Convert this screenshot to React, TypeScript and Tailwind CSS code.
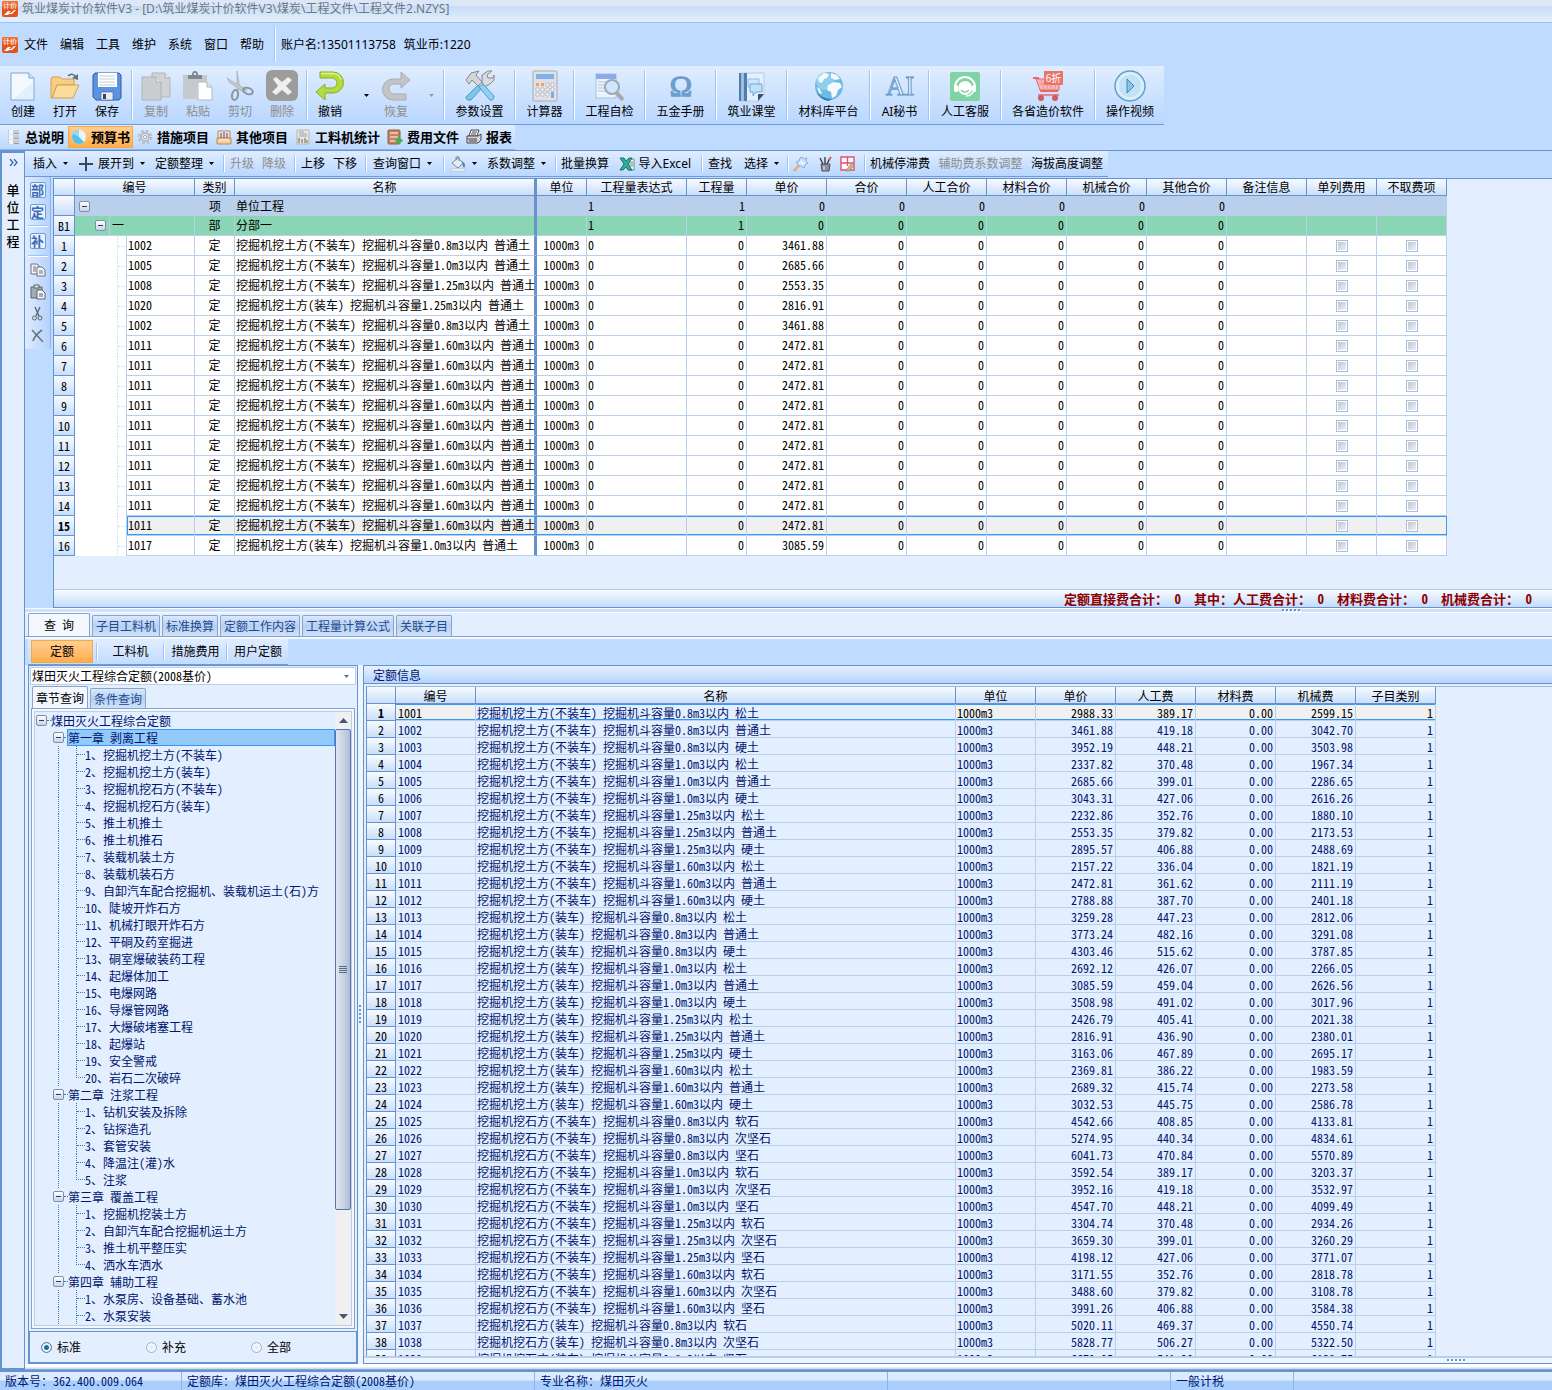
import { ReactNode, useState } from "react";
import { clsx } from "clsx";

const SONG =
  "font-['Noto_Sans_CJK_SC',sans-serif] [font-feature-settings:'hwid']";
const YAHEI = "font-['Noto_Sans','Noto_Sans_CJK_SC',sans-serif]";

/* ---------- icons ---------- */

function Svg({ size = 32, children }: { size?: number; children: ReactNode }) {
  return (
    <svg
      width={size}
      height={size}
      viewBox={`0 0 ${size} ${size}`}
      className="shrink-0"
      aria-hidden="true"
    >
      {children}
    </svg>
  );
}

function Caret({ muted = false }: { muted?: boolean }) {
  return (
    <svg width="5" height="3" viewBox="0 0 5 3" aria-hidden="true">
      <path d="M0 0h5L2.5 3z" fill={muted ? "#8d99ad" : "#000"} />
    </svg>
  );
}

function Logo() {
  return (
    <Svg size={16}>
      <rect width="16" height="16" rx="2" fill="#e2531d" />
      <rect width="16" height="7" rx="2" fill="#ee6f35" />
      <text x="1" y="7" fontSize="7" fill="#fff" fontFamily="Noto Sans CJK SC">
        计价
      </text>
      <path d="M2 14l4-4h3l-2 2h2l3-3h2l-4 4H7l-1 1z" fill="#fff" />
    </Svg>
  );
}

const NewIcon = (
  <Svg>
    <path d="M4 3h18l5 5v22H4z" fill="#f4f9ff" stroke="#7ba6d6" />
    <path d="M22 3v5h5" fill="#d5e6fa" stroke="#7ba6d6" />
    <path d="M6 29h20V12L9 27z" fill="#d9e8fb" opacity=".6" />
  </Svg>
);
const OpenIcon = (
  <Svg>
    <path d="M2 9l1-2h8l2 2h12v6H8L3 28H2z" fill="#f6cf86" stroke="#d3a049" />
    <path d="M8 15h22l-6 13H3z" fill="#fbdc9c" stroke="#d3a049" />
    <path d="M19 6q4-4 8 1" fill="none" stroke="#60707f" strokeWidth="1.6" />
    <path d="M23 8l6 2V4z" fill="#60707f" />
  </Svg>
);
const SaveIcon = (
  <Svg>
    <path d="M4 3h24l2 2v23l-2 2H5l-3-3V5z" fill="#5b92e2" stroke="#2e5fa9" />
    <path d="M7 3h19v14H7z" fill="#fff" />
    <path d="M8 6h16M8 9h16M8 12h16M8 15h16" stroke="#c8cdd4" />
    <path d="M10 22h12v8H10z" fill="#e8ebef" stroke="#3c63a0" strokeWidth=".6" />
    <path d="M12 24h3v5h-3z" fill="#3e4550" />
  </Svg>
);
const CopyIcon = (
  <Svg>
    <path d="M12 3h13l5 5v19H12z" fill="#d0d2d5" stroke="#b4b7bc" />
    <path d="M2 7h14l5 5v18H2z" fill="#cbcdd0" stroke="#afb2b7" />
    <path d="M16 7v5h5M25 3v5h5" fill="#e5e6e8" stroke="#afb2b7" />
  </Svg>
);
const PasteIcon = (
  <Svg>
    <path d="M1 5h24v9H15v15H1z" fill="#c6c9ce" />
    <path d="M6 5h4q0-4 3-4t3 4h4v4H6z" fill="#7d8894" />
    <path d="M12 3h2v2h-2z" fill="#e3e7ec" />
    <path d="M16 12h9l5 5v13H16z" fill="#fff" stroke="#b3b8bf" />
    <path d="M25 12v5h5" fill="#dfe3e8" stroke="#b3b8bf" />
  </Svg>
);
const CutIcon = (
  <Svg>
    <path d="M13 1l3 18-3 2z" fill="#c3c7cd" stroke="#a2a8b0" strokeWidth=".6" />
    <path d="M3 8l20 12-4 2L5 12z" fill="#c3c7cd" stroke="#a2a8b0" strokeWidth=".6" />
    <ellipse cx="11" cy="25" rx="3" ry="5" fill="none" stroke="#8d939c" strokeWidth="2" transform="rotate(12 11 25)" />
    <ellipse cx="24" cy="21" rx="5" ry="3" fill="none" stroke="#8d939c" strokeWidth="2" transform="rotate(20 24 21)" />
  </Svg>
);
const DeleteIcon = (
  <Svg>
    <rect width="32" height="31" rx="6" fill="#9c9c9c" />
    <path d="M7 9l3-2 6 5 6-5 4 3-6 6 6 6-4 3-6-5-6 5-4-3 6-6z" fill="#efefef" />
  </Svg>
);
const UndoIcon = (
  <Svg>
    <path
      d="M6 2h13a10 10 0 0 1 0 21h-8v7L2 22l9-8v4h7a5 5 0 0 0 0-10H6z"
      fill="#b4dc3e"
      stroke="#86ad22"
    />
    <path d="M7 3.500h12q6 0 8 6" fill="none" stroke="#dcf38d" strokeWidth="1.5" />
  </Svg>
);
const RedoIcon = (
  <Svg>
    <g transform="matrix(-1 0 0 -1 32 32)">
      <path
        d="M6 2h13a10 10 0 0 1 0 21h-8v7L2 22l9-8v4h7a5 5 0 0 0 0-10H6z"
        fill="#c2c4c7"
        stroke="#aaadb1"
      />
    </g>
  </Svg>
);
const ToolsIcon = (
  <Svg>
    <path d="M2 27l12-12 4 3L7 30q-5 1-5-3z" fill="#7cc4ec" stroke="#5599c4" />
    <path d="M2 10l5-7 8-2-3 4 6 7-4 4-6-6-3 4z" fill="#d3d5d8" stroke="#85898f" />
    <path d="M18 12V5l6-4h4l-5 4 1 3h5l1-3v5l-4 4-6 3z" fill="#d9dbde" stroke="#85898f" />
    <path d="M15 17l4-3 11 12q0 5-4 4z" fill="#8fd0f3" stroke="#5599c4" />
  </Svg>
);
const CalcIcon = (
  <Svg>
    <rect x="4" y="1" width="24" height="30" rx="1" fill="#dfe1e4" stroke="#a8acb3" />
    <rect x="7" y="4" width="18" height="5" fill="#80b2ea" />
    <path d="M7 13h3v3H7zm5 0h3v3h-3z" fill="#f0a35c" />
    <path
      d="M17 13h3v3h-3zm5 0h3v3h-3zM7 18h3v3H7zm5 0h3v3h-3zm5 0h3v3h-3zm5 0h3v3h-3zM7 23h3v3H7zm5 0h3v3h-3zm5 0h3v3h-3z"
      fill="#fff"
      stroke="#aab"
      strokeWidth=".7"
    />
    <path d="M22 22h3v6h-3z" fill="#77aee8" />
  </Svg>
);
const CheckIcon = (
  <Svg>
    <rect x="2" y="4" width="20" height="24" fill="#edf3fb" stroke="#a9bfdf" />
    <rect x="2" y="4" width="20" height="5" fill="#8da9ea" />
    <path d="M4 12h9M4 15h7M4 18h7M4 21h8" stroke="#b4c4da" />
    <circle cx="18" cy="17" r="7" fill="#cfe6fb" stroke="#9aa9bb" strokeWidth="2" />
    <path d="M22 22l7 8" stroke="#a8a9ad" strokeWidth="4" />
  </Svg>
);
const OmegaIcon = (
  <Svg>
    <text x="16" y="26" textAnchor="middle" fontSize="30" fill="#6d9dcc" stroke="#6d9dcc" strokeWidth="1.3" fontFamily="Liberation Serif">
      Ω
    </text>
  </Svg>
);
const ClassIcon = (
  <Svg>
    <path d="M5 3h23v21l-6 7H5z" fill="#e2f1fd" stroke="#b5cce3" />
    <path d="M3 3h8v28H3z" fill="#4d7fae" />
    <path d="M5 3h3v28H5z" fill="#9fc0dc" />
    <path d="M12 9h11v8H12z" fill="#cfe7f8" stroke="#8dbbe0" />
    <path d="M14 14h12v8h-6l-3 4v-4h-3z" fill="#bfe0f6" stroke="#67a9d8" />
    <path d="M22 31v-7h6z" fill="#3d5266" />
  </Svg>
);
const GlobeIcon = (
  <Svg>
    <circle cx="16" cy="16" r="14" fill="#6cbbe2" />
    <circle cx="12" cy="11" r="9" fill="#a9dcf2" opacity=".6" />
    <path d="M5 8l6-5 5 1-2 4-3 1-2 4-3-1zM15 15l6-3 6 1 2 4-4 3-2 6-4 2-1-6-4-2zM18 3l6 2 3 4-5 1-4-2zM4 17l3 2 2 5-3-1z" fill="#f4fafd" />
    <path d="M3 21q7 9 17 8l-5 2Q6 29 3 21z" fill="#2f7fae" />
  </Svg>
);
const AiIcon = (
  <Svg>
    <text x="16" y="25" textAnchor="middle" fontSize="27" fill="#f2f8ff" stroke="#6296c8" strokeWidth="1" fontFamily="Liberation Serif">
      AI
    </text>
  </Svg>
);
const ServiceIcon = (
  <Svg>
    <rect x="1" y="2" width="30" height="29" rx="2" fill="#7fd3a5" />
    <path d="M6 17a10 10 0 0 1 20 0" fill="none" stroke="#fff" strokeWidth="2" />
    <rect x="5" y="15" width="4" height="7" rx="1.5" fill="#fff" />
    <rect x="23" y="15" width="4" height="7" rx="1.5" fill="#fff" />
    <circle cx="16" cy="18" r="7" fill="#fff" />
    <path d="M12 20q4 4 8 0" fill="none" stroke="#7fd3a5" strokeWidth="1.3" />
    <path d="M24 22q-2 4-7 4" fill="none" stroke="#fff" strokeWidth="1.5" />
  </Svg>
);
const CartIcon = (
  <Svg>
    <path d="M1 8h5l3 13h17" fill="none" stroke="#e56b6b" strokeWidth="1.8" />
    <path d="M4 9h23v11H8z" fill="#f7b5b5" stroke="#e56b6b" />
    <path d="M9 10l3 9m2-9l2 9m3-9v9m5-9l-1 9M6 14h20" stroke="#e88" strokeWidth=".8" />
    <path d="M6 25h21" stroke="#e56b6b" strokeWidth="1.5" />
    <circle cx="9" cy="28" r="3" fill="#d65a5a" />
    <circle cx="23" cy="28" r="3" fill="#d65a5a" />
    <rect x="12" y="1" width="19" height="14" rx="1" fill="#e87565" />
    <text x="21.5" y="12" textAnchor="middle" fontSize="10" fill="#fff" fontFamily="Noto Sans CJK SC">
      6折
    </text>
  </Svg>
);
const PlayIcon = (
  <Svg>
    <circle cx="16" cy="16" r="15" fill="#d4ebfa" stroke="#5d9cc7" strokeWidth="1.4" />
    <circle cx="16" cy="16" r="12" fill="#c3e2f6" stroke="#e9f6ff" />
    <path d="M13 9l7 7-7 7z" fill="#8fc3e6" stroke="#3f86b8" />
  </Svg>
);

const DbIcon = (
  <Svg size={16}>
    <path d="M3 1h11v4H3zM3 6h11v4H3zM3 11h11v4H3z" fill="#c7cacf" />
    <path d="M4 1h4v4H4zM4 6h4v4H4zM4 11h4v4H4z" fill="#f3f4f6" />
    <path d="M9 4.500h5M9 9.500h5M9 14.500h5" stroke="#9a9fa7" />
  </Svg>
);
const PieIcon = (
  <Svg size={16}>
    <circle cx="8" cy="8" r="7" fill="#e3f6fd" />
    <path d="M8 8V1a7 7 0 1 0 5 12z" fill="#56bfe6" />
    <path d="M8 8V1a7 7 0 0 0-6 4z" fill="#95daf3" />
  </Svg>
);
const GearIcon = (
  <Svg size={16}>
    <circle cx="8" cy="8" r="6" fill="none" stroke="#b4bfce" strokeWidth="2.6" strokeDasharray="2.6 2.1" />
    <circle cx="8" cy="8" r="4" fill="#dfe6ef" stroke="#a8b4c5" strokeWidth="1.5" />
    <circle cx="8" cy="8" r="1.6" fill="#fff" stroke="#9fabbd" />
  </Svg>
);
const BoxIcon = (
  <Svg size={16}>
    <path d="M2 2h12v7H2z" fill="#efe4d6" stroke="#b08c63" />
    <path d="M5 4v5M8 3v6M11 4v5" stroke="#8a6ea0" strokeWidth="1.4" />
    <path d="M1 9h14v6H1z" fill="#f2cf9d" stroke="#b98a4e" />
    <path d="M3 11h10" stroke="#fff3df" />
  </Svg>
);
const StatIcon = (
  <Svg size={16}>
    <path d="M2 1h12v14H2z" fill="#e9e9e4" stroke="#b4b5ae" />
    <path d="M4 3h5M4 5h8M4 7h8" stroke="#9fa19a" />
    <path d="M4 9v5M7 10v4M10 9v5M12 11v3" stroke="#8d8f88" strokeWidth="1.5" />
  </Svg>
);
const FeeIcon = (
  <Svg size={16}>
    <rect x="1" y="1" width="12" height="14" rx="1" fill="#c08465" stroke="#95593c" />
    <path d="M3 4h8M3 8h8M3 12h6" stroke="#edd0bd" strokeWidth="1.6" />
    <path d="M12 8v7M8.500 11.500h7" stroke="#35b34a" strokeWidth="2.4" />
  </Svg>
);
const PrintIcon = (
  <Svg size={16}>
    <path d="M5 1h8l-2 6H3z" fill="#fff" stroke="#444" />
    <path d="M1 7h11l3-2v6l-3 3H1z" fill="#d5d5d5" stroke="#444" />
    <path d="M2 10h9M3 12h8M6 3h5M5 5h5" stroke="#444" />
  </Svg>
);

const PlusIcon = (
  <Svg size={16}>
    <path d="M8 1v14M1 8h14" stroke="#3d4754" strokeWidth="2" />
  </Svg>
);
const BucketIcon = (
  <Svg size={16}>
    <path d="M2 7l6-5 5 5-5 5z" fill="#e8edf3" stroke="#7b8795" />
    <path d="M6 4V1h3v4" fill="none" stroke="#7b8795" />
    <path d="M12 5q5 3 2 7-2-2-2-7z" fill="#5a86c4" />
    <path d="M1 13h14v2H1z" fill="#fff" stroke="#b3b8be" strokeWidth=".6" />
  </Svg>
);
const ExcelIcon = (
  <Svg size={16}>
    <path d="M10 3h5v11h-5z" fill="#fff" stroke="#5c8a7d" />
    <path d="M11 6h3M11 8h3M11 10h3" stroke="#5c8a7d" />
    <path d="M1 2h4l2 3 3-3h3L9 8l4 6H9l-2-3-3 3H1l4-6z" fill="#2fae9b" stroke="#0d5a50" strokeWidth=".8" />
  </Svg>
);
const MagicIcon = (
  <Svg size={16}>
    <path d="M9 1l2 2 3-1-1 3 2 2-3 2-1 3-3-2-3 1V8L3 6l3-1 1-3z" fill="#c4e0fa" stroke="#7fb3e6" />
    <path d="M6 7h6M8 4l2 6" stroke="#fff" />
    <path d="M1 15l5-6" stroke="#e8ab68" strokeWidth="2.4" />
  </Svg>
);
const PenCupIcon = (
  <Svg size={16}>
    <path d="M4 8h9l-1 7H5z" fill="#8d9299" stroke="#4c5158" />
    <path d="M6 8L3 2M8 8V1M10 8l3-6" stroke="#3b4046" strokeWidth="1.4" />
    <path d="M12 4l2-3" stroke="#d2504c" strokeWidth="1.6" />
    <path d="M7 10v4" stroke="#e8ebee" />
  </Svg>
);
const GridPenIcon = (
  <Svg size={16}>
    <path d="M1 1h13v13H1zM7.500 1v9M1 7h13" fill="#fff" stroke="#e25275" strokeWidth="1.4" />
    <path d="M6 14l6-7 3 2-6 6H6z" fill="#cdb08b" stroke="#8e7757" strokeWidth=".6" />
  </Svg>
);

/* ---------- top bars ---------- */

const MENUS = ["文件", "编辑", "工具", "维护", "系统", "窗口", "帮助"];

function Sep() {
  return (
    <span className="my-1 w-[2px] shrink-0 self-stretch border-l border-[#9cc3f5] bg-white" />
  );
}

function TitleBar() {
  return (
    <header className={YAHEI}>
      <div className="flex h-[23px] items-start gap-1 border-b border-[#9cc3ee] bg-linear-to-b from-[#dce8f8] from-25% via-[#c9dcf5] via-30% to-[#e2f1fc] pt-px pl-[2px]">
        <Logo />
        <h1 className="text-[12px] leading-4 whitespace-nowrap text-[#6b7686]">
          筑业煤炭计价软件V3 - [D:\筑业煤炭计价软件V3\煤炭\工程文件\工程文件2.NZYS]
        </h1>
      </div>
      <div className="flex h-[43px] items-center bg-[#bfdbff] pl-[2px] text-[12px] leading-4 text-black">
        <Logo />
        <nav className="flex gap-3 pr-[10px] pl-[6px]">
          {MENUS.map((m) => (
            <button key={m} type="button">
              {m}
            </button>
          ))}
        </nav>
        <Sep />
        <span className="pl-[5px]">账户名:13501113758</span>
        <span className="pl-2">筑业币:1220</span>
      </div>
    </header>
  );
}

type BigProps = {
  icon: ReactNode;
  label: string;
  width: string;
  disabled?: boolean;
};

function BigButton({ icon, label, width, disabled }: BigProps) {
  return (
    <button
      type="button"
      disabled={disabled}
      className={clsx(
        "flex shrink-0 flex-col items-center gap-[2px] pt-1 text-[12px] leading-4 whitespace-nowrap",
        disabled ? "text-[#8d8d8d]" : "text-black",
        width,
      )}
    >
      {icon}
      {label}
    </button>
  );
}

const FEATURES: BigProps[] = [
  { icon: ToolsIcon, label: "参数设置", width: "w-[69px]" },
  { icon: CalcIcon, label: "计算器", width: "w-[57px]" },
  { icon: CheckIcon, label: "工程自检", width: "w-[69px]" },
  { icon: OmegaIcon, label: "五金手册", width: "w-[69px]" },
  { icon: ClassIcon, label: "筑业课堂", width: "w-[69px]" },
  { icon: GlobeIcon, label: "材料库平台", width: "w-[81px]" },
  { icon: AiIcon, label: "AI秘书", width: "w-[57px]" },
  { icon: ServiceIcon, label: "人工客服", width: "w-[70px]" },
  { icon: CartIcon, label: "各省造价软件", width: "w-[92px]" },
  { icon: PlayIcon, label: "操作视频", width: "w-[68px]" },
];

function MainToolbar() {
  return (
    <div className={clsx("flex bg-[#bfdbff]", YAHEI)}>
      <div className="flex h-[59px] border-b border-[#6f9bd9] bg-linear-to-b from-[#e0edff] to-[#b9d7ff]">
        <div className="flex pr-[3px] pl-[2px]">
          <BigButton icon={NewIcon} label="创建" width="w-[42px]" />
          <BigButton icon={OpenIcon} label="打开" width="w-[42px]" />
          <BigButton icon={SaveIcon} label="保存" width="w-[42px]" />
        </div>
        <Sep />
        <div className="flex pr-[3px] pl-[2px]">
          <BigButton icon={CopyIcon} label="复制" width="w-[42px]" disabled />
          <BigButton icon={PasteIcon} label="粘贴" width="w-[42px]" disabled />
          <BigButton icon={CutIcon} label="剪切" width="w-[42px]" disabled />
          <BigButton icon={DeleteIcon} label="删除" width="w-[42px]" disabled />
        </div>
        <Sep />
        <div className="flex w-[135px]">
          <BigButton icon={UndoIcon} label="撤销" width="w-11" />
          <button type="button" aria-label="撤销列表" className="flex w-7 items-center justify-center">
            <Caret />
          </button>
          <BigButton icon={RedoIcon} label="恢复" width="w-8" disabled />
          <button type="button" aria-label="恢复列表" className="flex flex-1 items-center justify-center pl-2" disabled>
            <Caret muted />
          </button>
        </div>
        {FEATURES.map((f) => (
          <div key={f.label} className="flex">
            <Sep />
            <BigButton {...f} />
          </div>
        ))}
      </div>
    </div>
  );
}

const PAGES = [
  { icon: DbIcon, label: "总说明" },
  { icon: PieIcon, label: "预算书" },
  { icon: GearIcon, label: "措施项目" },
  { icon: BoxIcon, label: "其他项目" },
  { icon: StatIcon, label: "工料机统计" },
  { icon: FeeIcon, label: "费用文件" },
  { icon: PrintIcon, label: "报表" },
];

function PageTabs() {
  const [page, setPage] = useState("预算书");
  return (
    <div className={clsx("flex border-b border-[#6593cf] bg-[#bfdbff]", SONG)}>
      <div className="flex h-[25px] items-start gap-px border-b border-[#8fb6ea] bg-linear-to-b from-[#e0edff] to-[#bcd8ff] pt-px pl-[2px]">
        {PAGES.map((p) => (
          <button
            key={p.label}
            type="button"
            onClick={() => setPage(p.label)}
            className={clsx(
              "flex h-[22px] items-center gap-1 border px-[2px] text-[13px] leading-5 font-bold whitespace-nowrap text-black",
              page === p.label
                ? "border-[#f5a944] bg-linear-to-b from-[#ffcf92] to-[#ffad4a]"
                : "border-transparent",
            )}
          >
            {p.icon}
            {p.label}
          </button>
        ))}
      </div>
    </div>
  );
}

type ToolProps = {
  label: string;
  icon?: ReactNode;
  drop?: boolean;
  disabled?: boolean;
};

function Tool({ label, icon, drop, disabled }: ToolProps) {
  return (
    <button
      type="button"
      disabled={disabled}
      className={clsx(
        "flex items-center gap-1 whitespace-nowrap",
        disabled ? "text-[#8d8d8d]" : "text-black",
      )}
    >
      {icon}
      {label}
      {drop && (
        <span className="pl-[2px]">
          <Caret />
        </span>
      )}
    </button>
  );
}

const TOOL_GROUPS: { width: string; tools: ToolProps[] }[] = [
  {
    width: "w-[198px] pl-2 pr-[9px]",
    tools: [
      { label: "插入", drop: true },
      { label: "展开到", icon: PlusIcon, drop: true },
      { label: "定额整理", drop: true },
    ],
  },
  {
    width: "w-[69px] pl-[5px] pr-2",
    tools: [
      { label: "升级", disabled: true },
      { label: "降级", disabled: true },
    ],
  },
  { width: "w-[69px] pl-[5px] pr-2", tools: [{ label: "上移" }, { label: "下移" }] },
  { width: "w-[76px] pl-[6px] pr-2", tools: [{ label: "查询窗口", drop: true }] },
];

function ActionBar() {
  return (
    <div
      className={clsx(
        "flex h-[26px] self-start border-b border-[#6f9bd9] bg-linear-to-b from-[#e0edff] to-[#b9d7ff] text-[12px] leading-4",
        YAHEI,
      )}
    >
      {TOOL_GROUPS.map((g, i) => (
        <div key={i} className="flex">
          <div className={clsx("flex items-center justify-between", g.width)}>
            {g.tools.map((t) => (
              <Tool key={t.label} {...t} />
            ))}
          </div>
          <Sep />
        </div>
      ))}
      <div className="flex w-[110px] items-center justify-between pr-[9px] pl-[5px]">
        <button type="button" aria-label="填充颜色" className="flex items-center gap-[6px]">
          {BucketIcon}
          <Caret />
        </button>
        <Tool label="系数调整" drop />
      </div>
      <Sep />
      <div className="flex w-[144px] items-center justify-between pr-[10px] pl-1">
        <Tool label="批量换算" />
        <Tool label="导入Excel" icon={ExcelIcon} />
      </div>
      <Sep />
      <div className="flex w-[84px] items-center justify-between pr-2 pl-[5px]">
        <Tool label="查找" />
        <Tool label="选择" drop />
      </div>
      <Sep />
      <div className="flex w-[75px] items-center justify-between pr-2 pl-1">
        <button type="button" aria-label="刷新">{MagicIcon}</button>
        <button type="button" aria-label="画笔">{PenCupIcon}</button>
        <button type="button" aria-label="表格编辑">{GridPenIcon}</button>
      </div>
      <Sep />
      <div className="flex w-[242px] items-center justify-between pr-[5px] pl-1">
        <Tool label="机械停滞费" />
        <Tool label="辅助费系数调整" disabled />
        <Tool label="海拔高度调整" />
      </div>
    </div>
  );
}

/* ---------- side bars ---------- */

function SideStrip() {
  return (
    <aside className="flex w-[25px] shrink-0 flex-col items-center border-y-2 border-r border-l-2 border-[#6593cf] bg-[#e3efff]">
      <button type="button" aria-label="展开侧栏" className="mt-px h-4">
        <svg width="9" height="7" viewBox="0 0 9 7" aria-hidden="true">
          <path d="M1 0l3 3.500L1 7M5 0l3 3.500L5 7" fill="none" stroke="#2c62b0" strokeWidth="1.2" />
        </svg>
      </button>
      <div className={clsx("mt-[11px] w-[13px] text-center text-[13px] leading-[17px] font-medium text-black", SONG)}>
        单位工程
      </div>
    </aside>
  );
}

function SideTools() {
  const boxed =
    "flex h-4 w-4 items-center justify-center rounded-[2px] border border-[#6f9bd9] bg-[#eaf3ff] text-[13px] leading-[14px] font-bold text-[#3a6cb4]";
  return (
    <div className={clsx("flex h-[172px] w-[26px] flex-col items-center rounded-b-[2px] border-r border-[#8fb6ea] bg-linear-to-r from-[#dfecff] to-[#b5d2fb] pt-[5px]", SONG)}>
      <button type="button" className={boxed}>部</button>
      <button type="button" className={clsx("mt-[6px]", boxed)}>定</button>
      <span className="mt-[5px] h-[2px] w-5 border-t border-[#9cc3f5] bg-white" />
      <button type="button" className={clsx("mt-[6px]", boxed)}>补</button>
      <span className="mt-[6px] h-[2px] w-5 border-t border-[#9cc3f5] bg-white" />
      <div className="mt-[5px] flex flex-col gap-[6px]">
        <button type="button" aria-label="复制">
          <Svg size={16}>
            <path d="M1 2h6l2 2v8H1z" fill="#f4f6f8" stroke="#6a727d" />
            <path d="M7 5h5l3 3v6H7z" fill="#f4f6f8" stroke="#6a727d" />
            <path d="M3 5h3M3 7h3M3 9h3M9 9h4M9 11h4" stroke="#6a727d" />
          </Svg>
        </button>
        <button type="button" aria-label="粘贴">
          <Svg size={16}>
            <path d="M1 3h11v11H1z" fill="#a4aab2" stroke="#5d646e" />
            <path d="M4 1h5v3H4z" fill="#dde1e6" stroke="#5d646e" />
            <path d="M7 6h5l3 3v6H7z" fill="#f4f6f8" stroke="#5d646e" />
            <path d="M9 10h4M9 12h4" stroke="#5d646e" />
          </Svg>
        </button>
        <button type="button" aria-label="剪切">
          <Svg size={16}>
            <path d="M5 1l4 9M10 1l-4 9" stroke="#5d646e" strokeWidth="1.300" />
            <circle cx="4.500" cy="12" r="2" fill="none" stroke="#5d646e" />
            <circle cx="10" cy="12" r="2" fill="none" stroke="#5d646e" />
          </Svg>
        </button>
        <button type="button" aria-label="删除">
          <Svg size={16}>
            <path d="M2 2l11 12M12 2Q5 7 3 13" fill="none" stroke="#6d747e" strokeWidth="1.600" />
          </Svg>
        </button>
      </div>
    </div>
  );
}

function ExpandBox() {
  return (
    <button
      type="button"
      aria-label="折叠"
      className="flex h-[11px] w-[11px] shrink-0 items-center justify-center rounded-[2px] border border-[#7b8fb0] bg-linear-to-b from-white to-[#c9d3e2]"
    >
      <span className="h-px w-[5px] bg-[#2b3a55]" />
    </button>
  );
}

/* ---------- budget grid ---------- */

const HEAD =
  "border-r border-b border-[#6593cf] bg-linear-to-b from-[#f8fbff] to-[#c9dffb] p-0 overflow-hidden text-black";

const BUDGET_COLS = [
  "w-[21px]", "w-[120px]", "w-[40px]", "w-[302px]", "w-[50px]", "w-[100px]",
  "w-[60px]", "w-[80px]", "w-[80px]", "w-[80px]", "w-[80px]", "w-[80px]",
  "w-[80px]", "w-[80px]", "w-[70px]", "w-[70px]",
];
const BUDGET_HEADS = [
  "", "编号", "类别", "名称", "单位", "工程量表达式", "工程量", "单价", "合价",
  "人工合价", "材料合价", "机械合价", "其他合价", "备注信息", "单列费用", "不取费项",
];

const N08 = "挖掘机挖土方(不装车) 挖掘机斗容量0.8m3以内 普通土";
const N10 = "挖掘机挖土方(不装车) 挖掘机斗容量1.0m3以内 普通土";
const N125 = "挖掘机挖土方(不装车) 挖掘机斗容量1.25m3以内 普通土";
const N160 = "挖掘机挖土方(不装车) 挖掘机斗容量1.60m3以内 普通土";
const L125 = "挖掘机挖土方(装车) 挖掘机斗容量1.25m3以内 普通土";
const L10 = "挖掘机挖土方(装车) 挖掘机斗容量1.0m3以内 普通土";

const BUDGET: [string, string, string][] = [
  ["1002", N08, "3461.88"],
  ["1005", N10, "2685.66"],
  ["1008", N125, "2553.35"],
  ["1020", L125, "2816.91"],
  ["1002", N08, "3461.88"],
  ...Array.from({ length: 10 }, (): [string, string, string] => ["1011", N160, "2472.81"]),
  ["1017", L10, "3085.59"],
];

const CELL = "border-r border-b border-[#b9cfeb] overflow-hidden whitespace-nowrap";
const NAME_EDGE = "border-r-[3px] border-r-[#6593cf]";
const LEFT = "pt-0 pr-0 pb-px pl-px";
const MID = "px-0 pt-0 pb-px text-center";
const NUM = "pt-0 pr-[2px] pb-px pl-0 text-right";

function GridCheck({ label }: { label: string }) {
  return (
    <input
      type="checkbox"
      aria-label={label}
      className="mx-auto block h-3 w-3 appearance-none border border-[#a3bfe4] bg-linear-to-br from-[#b9bec9] to-[#f6f7f9] shadow-[inset_0_0_0_1px_#fff] checked:bg-[#3399ff]"
    />
  );
}

function BudgetGrid() {
  const sums = [0, 1, 2, 3, 4];
  return (
    <table
      className={clsx(
        "w-[1393px] table-fixed border-separate border-spacing-0 text-[12px] leading-4 text-black",
        SONG,
      )}
    >
      <colgroup>
        {BUDGET_COLS.map((w, i) => (
          <col key={i} className={w} />
        ))}
      </colgroup>
      <thead>
        <tr className="h-[17px]">
          {BUDGET_HEADS.map((h, i) => (
            <th key={i} scope="col" className={clsx(HEAD, "font-normal", i === 3 && "border-r-[3px]")}>
              {h}
            </th>
          ))}
        </tr>
      </thead>
      <tbody>
        <tr className="h-[20px] bg-[#b9cfeb]">
          <td className={HEAD} />
          <td className="py-0 pl-1">
            <ExpandBox />
          </td>
          <td className={MID}>项</td>
          <td className={clsx(LEFT, NAME_EDGE)}>单位工程</td>
          <td />
          <td className={LEFT}>1</td>
          <td className={NUM}>1</td>
          <td className={NUM}>0</td>
          {sums.map((s) => (
            <td key={s} className={NUM}>0</td>
          ))}
          <td colSpan={3} />
        </tr>
        <tr className="h-[20px] bg-[#8ad6b4]">
          <th scope="row" className={clsx(HEAD, "font-normal")}>B1</th>
          <td className={clsx(CELL, "p-0")}>
            <div className="flex h-[19px] items-center pl-5">
              <ExpandBox />
              <span className="ml-[3px] h-full border-l border-[#b9cfeb] pt-px pl-[2px]">一</span>
            </div>
          </td>
          <td className={clsx(CELL, MID)}>部</td>
          <td className={clsx(CELL, NAME_EDGE, LEFT)}>分部一</td>
          <td className={CELL} />
          <td className={clsx(CELL, LEFT)}>1</td>
          <td className={clsx(CELL, NUM)}>1</td>
          <td className={clsx(CELL, NUM)}>0</td>
          {sums.map((s) => (
            <td key={s} className={clsx(CELL, NUM)}>0</td>
          ))}
          <td className={CELL} />
          <td className={CELL} />
          <td className={CELL} />
        </tr>
        {BUDGET.map(([code, name, price], i) => {
          const active = i === 14;
          const cell = clsx(
            CELL,
            active && "bg-[#f0f0f0] shadow-[inset_0_1px_#3399ff,inset_0_-1px_#3399ff]",
          );
          return (
            <tr key={i} className="h-[20px] bg-white">
              <th scope="row" className={clsx(HEAD, active ? "font-bold" : "font-normal")}>
                {i + 1}
              </th>
              <td className="border-r border-[#b9cfeb] p-0">
                <div className="flex h-[20px]">
                  <span className="ml-[42px] flex w-[9px] items-center border-l border-dotted border-[#cfdff3]">
                    <span className="w-full border-t border-dotted border-[#cfdff3]" />
                  </span>
                  <span
                    className={clsx(
                      "flex-1 border-b border-l border-[#b9cfeb] pt-px pl-px",
                      active && "bg-[#f0f0f0] shadow-[inset_1px_1px_#3399ff,inset_0_-1px_#3399ff]",
                    )}
                  >
                    {code}
                  </span>
                </div>
              </td>
              <td className={clsx(cell, MID)}>定</td>
              <td className={clsx(cell, NAME_EDGE, LEFT)}>{name}</td>
              <td className={clsx(cell, MID)}>1000m3</td>
              <td className={clsx(cell, LEFT)}>0</td>
              <td className={clsx(cell, NUM)}>0</td>
              <td className={clsx(cell, NUM)}>{price}</td>
              {sums.map((s) => (
                <td key={s} className={clsx(cell, NUM)}>0</td>
              ))}
              <td className={cell} />
              <td className={clsx(cell, "p-0")}>
                <GridCheck label={`单列费用 ${i + 1}`} />
              </td>
              <td className={clsx(cell, "p-0", active && "border-r-[#3399ff]")}>
                <GridCheck label={`不取费项 ${i + 1}`} />
              </td>
            </tr>
          );
        })}
      </tbody>
    </table>
  );
}

function Grip() {
  return (
    <svg width="20" height="3" viewBox="0 0 20 3" aria-hidden="true">
      <path d="M0 0h2v2H0zM4 0h2v2H4zM8 0h2v2H8zM12 0h2v2h-2zM16 0h2v2h-2z" fill="#6593cf" />
      <path d="M2 1h1v2H1V2h1zM6 1h1v2H5V2h1zM10 1h1v2H9V2h1zM14 1h1v2h-2V2h1zM18 1h1v2h-2V2h1z" fill="#fff" />
    </svg>
  );
}

function Totals() {
  return (
    <div className={clsx("flex h-[19px] items-center justify-end border-t border-b border-t-[#b9c9e4] border-b-[#6593cf] bg-linear-to-b from-[#f8fbff] to-[#c4dbfb] pr-5 text-[13px] leading-4 font-bold whitespace-pre text-[#8b0000]", SONG)}>
      {"定额直接费合计： 0  其中：人工费合计： 0  材料费合计： 0  机械费合计： 0"}
    </div>
  );
}

/* ---------- query panel ---------- */

const TREE = [
  {
    title: "第一章 剥离工程",
    items: [
      "挖掘机挖土方(不装车)", "挖掘机挖土方(装车)", "挖掘机挖石方(不装车)",
      "挖掘机挖石方(装车)", "推土机推土", "推土机推石", "装载机装土方",
      "装载机装石方", "自卸汽车配合挖掘机、装载机运土(石)方", "陡坡开炸石方",
      "机械打眼开炸石方", "平硐及药室掘进", "硐室爆破装药工程", "起爆体加工",
      "电爆网路", "导爆管网路", "大爆破堵塞工程", "起爆站", "安全警戒",
      "岩石二次破碎",
    ],
  },
  {
    title: "第二章 注浆工程",
    items: ["钻机安装及拆除", "钻探造孔", "套管安装", "降温注(灌)水", "注浆"],
  },
  {
    title: "第三章 覆盖工程",
    items: ["挖掘机挖装土方", "自卸汽车配合挖掘机运土方", "推土机平整压实", "洒水车洒水"],
  },
  {
    title: "第四章 辅助工程",
    items: ["水泵房、设备基础、蓄水池", "水泵安装"],
  },
];

const DOT = "border-dotted border-[#2f7fd0]";

function Tree() {
  return (
    <ul className="min-w-0 flex-1 overflow-hidden pl-px leading-[17px] whitespace-nowrap text-[#00156e]">
      <li>
        <div className="flex h-[17px] items-center">
          <ExpandBox />
          <span className={clsx("w-[4px] border-t", DOT)} />
          煤田灭火工程综合定额
        </div>
        <ul>
          {TREE.map((ch, c) => (
            <li key={ch.title}>
              <div className="flex h-[17px] items-center pl-[17px]">
                <ExpandBox />
                <span className={clsx("w-[4px] border-t", DOT)} />
                <span
                  className={clsx(
                    "flex h-[17px] flex-1 items-center",
                    c === 0 && "-ml-px border border-[#3399ff] bg-[#94c9f9]",
                  )}
                >
                  {ch.title}
                </span>
              </div>
              <ul>
                {ch.items.map((it, i) => {
                  const last = i === ch.items.length - 1 && c < 3;
                  return (
                    <li key={it} className="flex h-[17px] pl-[22px]">
                      <span className={clsx("w-[18px] border-l", DOT)} />
                      {last ? (
                        <span className={clsx("h-[9px] w-[9px] border-b border-l", DOT)} />
                      ) : (
                        <span className={clsx("flex w-[9px] items-center border-l", DOT)}>
                          <span className={clsx("w-full border-t", DOT)} />
                        </span>
                      )}
                      {i + 1}、{it}
                    </li>
                  );
                })}
              </ul>
            </li>
          ))}
        </ul>
      </li>
    </ul>
  );
}

function ScrollBar() {
  return (
    <div className="flex w-4 shrink-0 flex-col bg-[#f0f0f0]">
      <button type="button" aria-label="向上滚动" className="flex h-[17px] items-center justify-center">
        <svg width="9" height="5" viewBox="0 0 9 5" aria-hidden="true">
          <path d="M0 5h9L4.500 0z" fill="#4a5675" />
        </svg>
      </button>
      <div className="min-h-0 flex-1">
        <div className="flex h-[83%] flex-col items-center justify-center gap-px rounded-[2px] border border-[#5c73a3] bg-linear-to-r from-[#dfe6f0] via-[#c9d4e3] to-[#aebdd3]">
          <span className="h-px w-2 bg-[#5a6a8a]" />
          <span className="h-px w-2 bg-[#5a6a8a]" />
          <span className="h-px w-2 bg-[#5a6a8a]" />
          <span className="h-px w-2 bg-[#5a6a8a]" />
        </div>
      </div>
      <button type="button" aria-label="向下滚动" className="flex h-[17px] items-center justify-center">
        <svg width="9" height="5" viewBox="0 0 9 5" aria-hidden="true">
          <path d="M0 0h9L4.500 5z" fill="#4a5675" />
        </svg>
      </button>
    </div>
  );
}

const TAB_ON =
  "border border-b-0 border-[#8ba3cc] rounded-t-[2px] bg-[#f3f8ff] text-black";
const TAB_OFF =
  "border border-b-0 border-[#8ba3cc] rounded-t-[2px] bg-linear-to-b from-[#dbe9fb] via-[#b7d0f0] to-[#cfe2fa] text-[#1e4a92]";

function QueryPanel() {
  const [scope, setScope] = useState("标准");
  return (
    <section className="flex w-[330px] shrink-0 flex-col">
      <div className="flex min-h-0 flex-1 flex-col border border-b-0 border-[#6593cf] px-px pt-px">
        <div className="relative">
          <select
            aria-label="定额库"
            className="block h-[18px] w-full appearance-none border border-[#b9cfeb] bg-white pl-px text-[12px] leading-4 text-black"
          >
            <option>煤田灭火工程综合定额(2008基价)</option>
          </select>
          <span className="pointer-events-none absolute top-2 right-[7px]">
            <svg width="5" height="3" viewBox="0 0 5 3" className="block" aria-hidden="true">
              <path d="M0 0h5L2.5 3z" fill="#4473b5" />
            </svg>
          </span>
        </div>
        <div className="flex h-[23px] items-end gap-[2px] pl-[2px] leading-4">
          <button type="button" className={clsx("h-[22px] px-[3px]", TAB_ON)}>章节查询</button>
          <button type="button" className={clsx("h-5 px-[3px]", TAB_OFF)}>条件查询</button>
        </div>
        <div className="mx-px mb-[2px] flex min-h-0 flex-1 border border-[#8ba3cc] bg-[#f3f8ff] p-[2px]">
          <div className="flex min-h-0 flex-1 border border-[#b9cfeb] bg-[#e3efff]">
            <Tree />
            <ScrollBar />
          </div>
        </div>
      </div>
      <div className="flex h-[33px] shrink-0 items-center border-2 border-t border-[#6593cf] bg-[#e3efff] pl-[11px] text-black">
        {["标准", "补充", "全部"].map((s) => (
          <label key={s} className="flex w-[105px] items-center gap-[5px] leading-4">
            <input
              type="radio"
              name="scope"
              checked={scope === s}
              onChange={() => setScope(s)}
              className="h-[11px] w-[11px] appearance-none rounded-full border border-[#9fb2cc] bg-[#e6eef8] shadow-[inset_0_0_0_2px_#f4f8fd] checked:border-[#6b87ab] checked:bg-[#1d6f94]"
            />
            {s}
          </label>
        ))}
      </div>
    </section>
  );
}

/* ---------- quota table ---------- */

const CAPACITY = ["0.8", "1.0", "1.25", "1.60"];
const EARTH = ["松土", "普通土", "硬土"];
const ROCK = ["软石", "次坚石", "坚石"];

const PRICES: [string, string, string][] = [
  ["2988.33", "389.17", "2599.15"], ["3461.88", "419.18", "3042.70"],
  ["3952.19", "448.21", "3503.98"], ["2337.82", "370.48", "1967.34"],
  ["2685.66", "399.01", "2286.65"], ["3043.31", "427.06", "2616.26"],
  ["2232.86", "352.76", "1880.10"], ["2553.35", "379.82", "2173.53"],
  ["2895.57", "406.88", "2488.69"], ["2157.22", "336.04", "1821.19"],
  ["2472.81", "361.62", "2111.19"], ["2788.88", "387.70", "2401.18"],
  ["3259.28", "447.23", "2812.06"], ["3773.24", "482.16", "3291.08"],
  ["4303.46", "515.62", "3787.85"], ["2692.12", "426.07", "2266.05"],
  ["3085.59", "459.04", "2626.56"], ["3508.98", "491.02", "3017.96"],
  ["2426.79", "405.41", "2021.38"], ["2816.91", "436.90", "2380.01"],
  ["3163.06", "467.89", "2695.17"], ["2369.81", "386.22", "1983.59"],
  ["2689.32", "415.74", "2273.58"], ["3032.53", "445.75", "2586.78"],
  ["4542.66", "408.85", "4133.81"], ["5274.95", "440.34", "4834.61"],
  ["6041.73", "470.84", "5570.89"], ["3592.54", "389.17", "3203.37"],
  ["3952.16", "419.18", "3532.97"], ["4547.70", "448.21", "4099.49"],
  ["3304.74", "370.48", "2934.26"], ["3659.30", "399.01", "3260.29"],
  ["4198.12", "427.06", "3771.07"], ["3171.55", "352.76", "2818.78"],
  ["3488.60", "379.82", "3108.78"], ["3991.26", "406.88", "3584.38"],
  ["5020.11", "469.37", "4550.74"], ["5828.77", "506.27", "5322.50"],
  ["6679.95", "541.20", "6138.75"],
];

function quotaName(i: number) {
  const kind = i < 24 ? "土方" : "石方";
  const load = (i < 24 ? i : i - 24) < 12 ? "不装车" : "装车";
  const cap = CAPACITY[Math.floor((i % 12) / 3)];
  const grade = (i < 24 ? EARTH : ROCK)[i % 3];
  return `挖掘机挖${kind}(${load}) 挖掘机斗容量${cap}m3以内 ${grade}`;
}

const QUOTA_HEADS = [
  "", "编号", "名称", "单位", "单价", "人工费", "材料费", "机械费", "子目类别",
];
const QUOTA_COLS = [
  "w-[29px]", "w-[80px]", "w-[480px]", "w-[80px]", "w-[80px]", "w-[80px]",
  "w-[80px]", "w-[80px]", "w-[80px]",
];
const Q_LEFT = "pt-px pr-0 pb-0 pl-[2px]";
const Q_NUM = "pt-px pr-[2px] pb-0 pl-0 text-right";

function QuotaTable() {
  return (
    <table className="w-[1069px] table-fixed border-separate border-spacing-0 text-[12px] leading-[15px] text-[#00156e]">
      <colgroup>
        {QUOTA_COLS.map((w, i) => (
          <col key={i} className={w} />
        ))}
      </colgroup>
      <thead>
        <tr className="h-[17px]">
          {QUOTA_HEADS.map((h, i) => (
            <th key={i} scope="col" className={clsx(HEAD, "font-normal")}>
              {h}
            </th>
          ))}
        </tr>
      </thead>
      <tbody>
        {PRICES.map(([total, labor, machine], i) => {
          const focus = i === 0 && "shadow-[inset_0_1px_#3399ff,inset_0_-1px_#3399ff]";
          const cell = clsx(CELL, focus, i === 0 && "bg-[#f0f0f0] text-black");
          return (
            <tr key={i} className="h-[17px]">
              <th scope="row" className={clsx(HEAD, i === 0 ? "font-bold" : "font-normal")}>
                {i + 1}
              </th>
              <td className={clsx(cell, Q_LEFT)}>{1001 + i}</td>
              <td className={clsx(CELL, focus, "pt-px pr-0 pb-0 pl-px")}>{quotaName(i)}</td>
              <td className={clsx(cell, "pt-px pr-0 pb-0 pl-px")}>1000m3</td>
              <td className={clsx(cell, Q_NUM)}>{total}</td>
              <td className={clsx(cell, Q_NUM)}>{labor}</td>
              <td className={clsx(cell, Q_NUM)}>0.00</td>
              <td className={clsx(cell, Q_NUM)}>{machine}</td>
              <td className={clsx(cell, Q_NUM)}>1</td>
            </tr>
          );
        })}
      </tbody>
    </table>
  );
}

function QuotaPanel() {
  return (
    <section className="flex min-w-0 flex-1 flex-col border-y border-l border-[#6593cf]">
      <h2 className="h-[18px] shrink-0 border-b border-[#6593cf] bg-linear-to-b from-[#e6f1ff] to-[#b4d4ff] pl-[9px] text-[12px] leading-[17px] text-[#00156e]">
        定额信息
      </h2>
      <div className="mt-[2px] ml-[2px] min-h-0 flex-1 overflow-hidden border-t border-l border-t-[#9db9dd] border-l-[#6593cf]">
        <QuotaTable />
      </div>
      <div className="flex h-[7px] shrink-0 justify-end border-t-2 border-[#b9cfeb] bg-[#eef5ff] pt-px pr-[85px]">
        <Grip />
      </div>
    </section>
  );
}

const DETAIL_TABS = ["子目工料机", "标准换算", "定额工作内容", "工程量计算公式", "关联子目"];
const SOURCES = [
  { label: "工料机", width: "w-[65px]" },
  { label: "措施费用", width: "w-[61px]" },
  { label: "用户定额", width: "w-[60px]" },
];

function DetailPane() {
  return (
    <div className={clsx("flex min-h-0 flex-1 flex-col bg-[#e3efff] text-[12px]", SONG)}>
      <div className="flex h-6 shrink-0 items-end gap-[2px] border-b border-[#8ba3cc] pl-[3px] leading-4 whitespace-nowrap">
        <button type="button" className={clsx("h-[23px] w-[62px] whitespace-pre", TAB_ON)}>
          查 询
        </button>
        {DETAIL_TABS.map((t) => (
          <button key={t} type="button" className={clsx("h-[21px] px-[3px]", TAB_OFF)}>
            {t}
          </button>
        ))}
      </div>
      <div className="flex h-[28px] shrink-0 border-t-2 border-[#f3f8ff] bg-[#bfdbff] pl-[3px]">
        <div className={clsx("flex items-stretch border-b border-[#6f9bd9] bg-linear-to-b from-[#e0edff] to-[#c3dcff] pl-[3px] leading-4 text-black", YAHEI)}>
          <button
            type="button"
            className="my-px mr-[3px] w-[62px] border border-[#f5a944] bg-linear-to-b from-[#ffcf92] to-[#ffad4a]"
          >
            定额
          </button>
          {SOURCES.map((s) => (
            <div key={s.label} className="flex">
              <Sep />
              <button type="button" className={s.width}>
                {s.label}
              </button>
            </div>
          ))}
        </div>
      </div>
      <div className="flex min-h-0 flex-1 pl-[3px]">
        <QueryPanel />
        <div className="flex w-[5px] shrink-0 items-center justify-center bg-[#eef5ff]">
          <svg width="3" height="20" viewBox="0 0 3 20" aria-hidden="true">
            <path d="M0 0h2v2H0zM0 4h2v2H0zM0 8h2v2H0zM0 12h2v2H0zM0 16h2v2H0z" fill="#6593cf" />
          </svg>
        </div>
        <QuotaPanel />
      </div>
      <div className="h-[6px] shrink-0 border-b border-[#8ba3cc] bg-linear-to-b from-white from-50% to-[#c5d5ee]" />
    </div>
  );
}

const STATUS = [
  { text: "版本号：362.400.009.064", width: "w-[182px]" },
  { text: "定额库：煤田灭火工程综合定额(2008基价)", width: "w-[353px]" },
  { text: "专业名称：煤田灭火", width: "w-[353px]" },
  { text: "", width: "w-[283px]" },
  { text: "一般计税", width: "w-[123px]" },
];

function StatusBar() {
  return (
    <footer className={clsx("flex h-[20px] shrink-0 border-t-2 border-[#6593cf] bg-linear-to-b from-[#dcebff] from-45% to-[#aacfff] to-50% text-[12px] leading-[18px] text-[#00156e]", SONG)}>
      {STATUS.map((s, i) => (
        <span key={i} className={clsx("shrink-0 border-r border-[#8fb2e0] pl-[5px] whitespace-nowrap", s.width)}>
          {s.text}
        </span>
      ))}
    </footer>
  );
}

export default function App() {
  return (
    <div className="flex h-screen flex-col overflow-hidden bg-[#bfdbff]">
      <TitleBar />
      <MainToolbar />
      <PageTabs />
      <main className="flex min-h-0 flex-1">
        <SideStrip />
        <div className="flex min-w-0 flex-1 flex-col">
          <ActionBar />
          <div className="flex shrink-0">
            <div className="w-7 shrink-0">
              <SideTools />
            </div>
            <div className="mt-px min-w-0 flex-1 border-l border-[#6593cf] bg-[#e3efff]">
              <div className="overflow-hidden border-t border-[#6593cf] pb-[33px]">
                <BudgetGrid />
              </div>
              <Totals />
            </div>
          </div>
          <div className="flex h-[5px] shrink-0 justify-end border-y border-[#f8fbff] bg-[#cfe2fb] pr-[250px]">
            <Grip />
          </div>
          <DetailPane />
        </div>
      </main>
      <StatusBar />
    </div>
  );
}
